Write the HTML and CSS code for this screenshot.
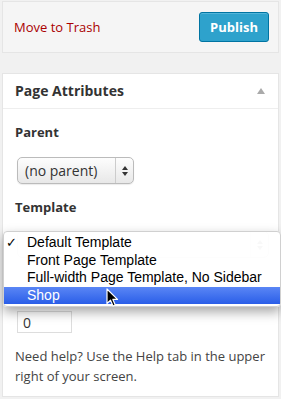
FILE: index.html
```html
<!DOCTYPE html>
<html lang="en">
<head>
  <meta charset="UTF-8">
  <meta name="viewport" content="width=device-width, initial-scale=1">
  <title>Page Attributes</title>
  <link rel="stylesheet" href="styles.css">
</head>
<body>

  <div class="publish-box">
    <a class="trash" href="#">Move to Trash</a>
    <button type="button" class="publish">Publish</button>
  </div>

  <div class="postbox">
    <div class="postbox-head">
      <h3>Page Attributes</h3>
      <span class="toggle"></span>
    </div>
    <div class="inside">
      <p class="label">Parent</p>
      <div class="fake-select parent">
        <span class="value">(no parent)</span>
        <span class="arrows"><i class="up"></i><i class="down"></i></span>
      </div>

      <p class="label">Template</p>
      <!-- covered by the open menu below -->
      <div class="fake-select template">
        <span class="value"></span>
        <span class="arrows"><i class="up"></i><i class="down"></i></span>
      </div>

      <input class="order" type="text" value="0">

      <p class="help">Need help? Use the Help tab in the upper right of your screen.</p>
    </div>
  </div>

  <!-- open dropdown of the template select -->
  <ul class="menu">
    <li class="checked">Default Template</li>
    <li>Front Page Template</li>
    <li>Full-width Page Template, No Sidebar</li>
    <li class="active">Shop</li>
  </ul>

  <svg class="cursor" width="13" height="20" viewBox="0 0 13 20">
    <path d="M1 1 L1 15.5 L4.5 12.2 L7 18 L9.3 17 L6.9 11.4 L11.5 11.4 Z" fill="#000" stroke="#fff" stroke-width="1.2" stroke-linejoin="round"/>
  </svg>

</body>
</html>
```

FILE: styles.css
```css
body {
  margin: 0;
  background: #f1f1f1;
  font-family: 'Open Sans', sans-serif;
  color: #444;
  font-size: 13px;
  position: relative;
  height: 399px;
  overflow: hidden;
}
.publish-box {
  margin: 1px 2px 0 2px;
  background: #f5f5f5;
  border: 1px solid #e5e5e5;
  display: flex;
  align-items: center;
  justify-content: space-between;
  padding: 10px 9px 10px 11px;
}
.trash {
  color: #a00;
  text-decoration: none;
  font-size: 13px;
}
.publish {
  width: 70px;
  height: 30px;
  background: #2ea2cc;
  border: 1px solid #0074a2;
  border-radius: 3px;
  color: #fff;
  font-family: 'Open Sans', sans-serif;
  font-weight: bold;
  font-size: 13px;
  box-shadow: inset 0 1px 0 rgba(120,200,230,.5);
  padding: 0;
}
.postbox {
  margin: 20px 2px 0 2px;
  background: #fff;
  border: 1px solid #e5e5e5;
  height: 322px;
}
.postbox-head {
  display: flex;
  align-items: center;
  justify-content: space-between;
  border-bottom: 1px solid #eee;
  padding: 7px 13px 7px 12px;
}
.postbox-head h3 {
  margin: 0;
  font-size: 14px;
  line-height: 20px;
  font-weight: bold;
  color: #333;
}
.toggle {
  width: 0;
  height: 0;
  border-left: 4px solid transparent;
  border-right: 4px solid transparent;
  border-bottom: 6px solid #aaa;
}
.inside {
  padding: 0 12px;
}
.label {
  margin: 13px 0 0;
  font-weight: bold;
  line-height: 20px;
  color: #333;
}
.fake-select {
  display: flex;
  align-items: stretch;
  height: 25px;
  border: 1px solid #bbb;
  border-radius: 5px;
  background: linear-gradient(#fdfdfd, #e8e8e8);
  box-shadow: 0 1px 1px rgba(0,0,0,.08);
  margin-left: 2px;
}
.fake-select .value {
  flex: 1;
  display: flex;
  align-items: center;
  padding-left: 7px;
  font-size: 14px;
  color: #333;
}
.fake-select .arrows {
  width: 17px;
  border-left: 1px solid #ccc;
  display: flex;
  flex-direction: column;
  align-items: center;
  justify-content: center;
  gap: 2px;
}
.fake-select i {
  width: 0;
  height: 0;
  border-left: 3px solid transparent;
  border-right: 3px solid transparent;
}
.fake-select .up { border-bottom: 4px solid #333; }
.fake-select .down { border-top: 4px solid #333; }
.parent {
  width: 115px;
  margin-top: 15px;
}
.template {
  width: 250px;
  margin-top: 14px;
}
.order {
  display: block;
  margin: 53px 0 0 2px;
  width: 55px;
  height: 22px;
  box-sizing: border-box;
  border: 1px solid #ddd;
  font-family: 'Open Sans', sans-serif;
  font-size: 14px;
  color: #333;
  padding: 0 5px;
}
.help {
  margin: 13px 0 0;
  line-height: 20px;
  color: #444;
}
.menu {
  position: absolute;
  top: 231px;
  left: 3px;
  width: 276px;
  margin: 0;
  padding: 2px 0 2px;
  list-style: none;
  background: rgba(255,255,255,.97);
  border: 1px solid #d0d0d0;
  border-radius: 4px;
  box-shadow: 0 5px 12px rgba(0,0,0,.35);
  font-family: 'Liberation Sans', Arial, sans-serif;
  font-size: 14px;
  color: #000;
}
.menu li {
  height: 17.5px;
  line-height: 17.5px;
  padding-left: 23px;
  position: relative;
}
.menu li.checked::before {
  content: "\2713";
  position: absolute;
  left: 2px;
  font-size: 13px;
}
.menu li.active {
  background: linear-gradient(#5a86f5, #2a5ee8);
  color: #fff;
}
.cursor {
  position: absolute;
  left: 106px;
  top: 288px;
}
```
